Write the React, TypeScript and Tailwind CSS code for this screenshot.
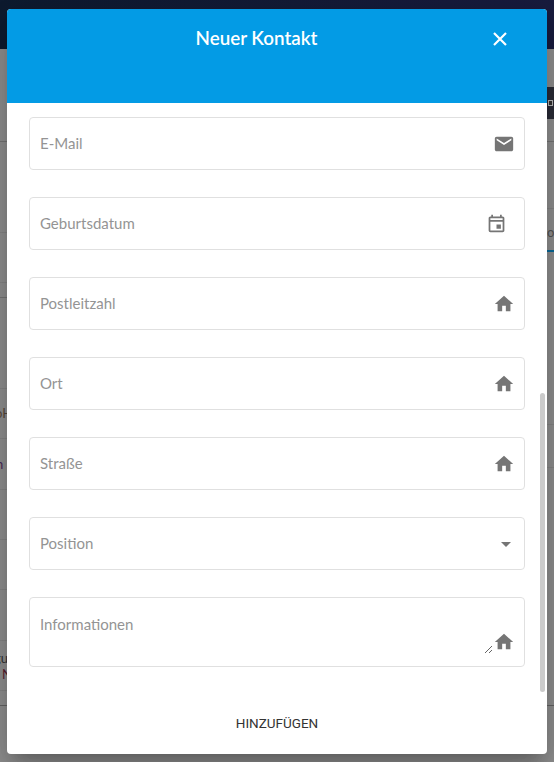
import { MdArrowDropDown, MdEmail, MdHome, MdOutlineEvent } from "react-icons/md";
import type { ReactNode } from "react";

// ─── Dimmed page behind the dialog ────────────────────────
function LeftStrip() {
  return (
    <div className="flex w-[7px] flex-col overflow-hidden">
      <div className="h-[142px] shrink-0 border-b border-[#777]" />
      <div className="h-[91px] shrink-0 border-b border-[#888]" />
      <div className="h-[50px] shrink-0 border-b border-[#888]" />
      <div className="h-[15px] shrink-0 border-b border-[#777]" />
      <div className="h-[91px] shrink-0 border-b border-[#888]" />
      <div className="flex h-[50px] shrink-0 items-center border-b border-[#888] text-[13px] leading-none whitespace-nowrap text-[#5a4a3a]">
        <span className="ml-[-5px]">oH</span>
      </div>
      <div className="flex h-[51px] shrink-0 items-center border-b border-[#888] text-[13px] leading-none text-[#4a2a5a]">
        <span className="ml-[-4px]">n</span>
      </div>
      <div className="h-[50px] shrink-0 border-b border-[#888]" />
      <div className="h-[50px] shrink-0 border-b border-[#888]" />
      <div className="h-[51px] shrink-0 border-b border-[#888]" />
      <div className="flex h-[50px] shrink-0 flex-col justify-center border-b border-[#888] text-[13px] leading-[16px] whitespace-nowrap">
        <span className="ml-[-6px] text-[#333]">gu</span>
        <span className="ml-[2px] text-[#5a2030]">N</span>
      </div>
      <div className="h-[15px] shrink-0 border-b border-[#666]" />
    </div>
  );
}

function RightStrip() {
  return (
    <div className="flex w-[7px] flex-col overflow-hidden">
      <div className="h-[87px] shrink-0" />
      <div className="flex h-[32px] shrink-0 items-center bg-[#2b2d38]">
        <span className="ml-[1px] h-[6px] w-[5px] border border-[#bbb] bg-[#333]" />
      </div>
      <div className="h-[23px] shrink-0 border-b border-[#777]" />
      <div className="h-[67px] shrink-0 border-b border-[#888]" />
      <div className="flex h-[43px] shrink-0 items-end border-b-2 border-[#0a6d9e] pb-[11px] text-[13px] leading-none text-[#555]">or</div>
      <div className="h-[173px] shrink-0 border-b border-[#888]" />
      <div className="h-[43px] shrink-0 border-b border-[#888]" />
      <div className="h-[238px] shrink-0 border-b border-[#666]" />
    </div>
  );
}

// ─── Form fields ──────────────────────────────────────────
function Field({ label, icon }: { label: string; icon: ReactNode }) {
  return (
    <div className="flex h-[53px] items-center rounded border border-[#e0e0e0] pr-[9px] pl-[10px]">
      <input
        readOnly
        placeholder={label}
        className="min-w-0 flex-1 bg-transparent text-[15px] outline-none placeholder:text-[#949494]"
      />
      {icon}
    </div>
  );
}

const homeIcon = <MdHome size={22} className="text-[#757575]" />;

export default function App() {
  return (
    <div className="relative h-[762px] w-[554px] overflow-hidden bg-[#939393] font-['Lato',sans-serif]">
      <div className="h-[49px] bg-gradient-to-r from-[#0e1b30] to-[#191c3f]" />
      <div className="absolute inset-x-0 top-0 flex justify-between">
        <LeftStrip />
        <RightStrip />
      </div>

      {/* Dialog */}
      <div className="absolute top-[9px] left-[7px] flex h-[745px] w-[540px] flex-col overflow-hidden rounded bg-white shadow-[0_11px_15px_-7px_rgba(0,0,0,0.2),0_24px_38px_3px_rgba(0,0,0,0.14),0_9px_46px_8px_rgba(0,0,0,0.12)]">
        <div className="flex h-[94px] shrink-0 items-start bg-[#039be5] pt-[15px] text-white">
          <h2 className="flex-1 pl-[13px] text-center text-[18.8px] leading-[28px] font-semibold">Neuer Kontakt</h2>
          <svg width="14" height="14" viewBox="0 0 14 14" className="mt-[8px] mr-[40px]">
            <path d="M1 1l12 12M13 1L1 13" stroke="currentColor" strokeWidth="2.2" fill="none" />
          </svg>
        </div>

        <div className="flex flex-1 flex-col gap-[27px] pt-[14px] pr-[22px] pl-[22px]">
          <Field label="E-Mail" icon={<MdEmail size={22} className="text-[#757575]" />} />
          <Field label="Geburtsdatum" icon={<MdOutlineEvent size={21} className="mr-[8px] text-[#757575]" />} />
          <Field label="Postleitzahl" icon={homeIcon} />
          <Field label="Ort" icon={homeIcon} />
          <Field label="Straße" icon={homeIcon} />
          <Field label="Position" icon={<MdArrowDropDown size={24} className="mr-[-3px] text-[#757575]" />} />
          <div className="flex h-[70px] items-start rounded border border-[#e0e0e0] pr-[9px] pl-[10px]">
            <textarea
              readOnly
              placeholder="Informationen"
              className="mt-[16px] h-[40px] min-w-0 flex-1 bg-transparent text-[15px] leading-[20px] outline-none placeholder:text-[#949494]"
            />
            <MdHome size={22} className="mt-[33px] shrink-0 text-[#757575]" />
          </div>
        </div>

        <div className="flex h-[39px] shrink-0 items-start justify-center">
          <button className="font-['Roboto',sans-serif] text-[13.5px] leading-[16px] text-[#333]">HINZUFÜGEN</button>
        </div>

        {/* Scrollbar thumb */}
        <div className="absolute top-[384px] right-[2px] h-[299px] w-[5px] rounded-sm bg-[#cbcbcb]" />
      </div>
    </div>
  );
}
